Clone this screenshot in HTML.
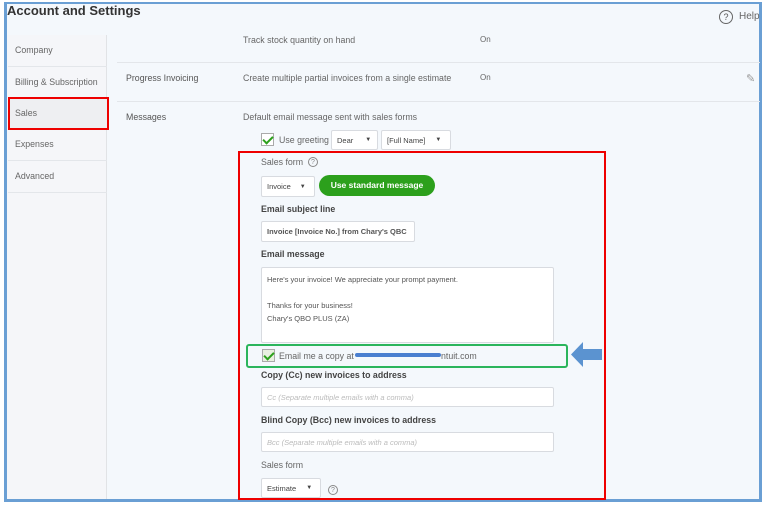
<!DOCTYPE html>
<html><head><style>
*{box-sizing:border-box;margin:0;padding:0}
body{width:766px;height:505px;background:#fff;font-family:"Liberation Sans",sans-serif;position:relative;overflow:hidden;color:#555}
.a{position:absolute}
.t{position:absolute;font-size:8.8px;color:#666;white-space:nowrap}
.b{font-weight:bold;color:#444}
.in{position:absolute;background:#fff;border:1px solid #d8dbe0;border-radius:2px;font-size:7.5px;color:#444;padding-left:5px;display:flex;align-items:center;white-space:nowrap}
.ph{color:#bbb;font-style:italic}
.hr{position:absolute;height:1px;background:#e3e6ea}
.cb{position:absolute;width:13px;height:13px;border:1px solid #aaa;background:#fff}
.cb:after{content:"";position:absolute;left:3px;top:0px;width:4px;height:8px;border:solid #2ca01c;border-width:0 2px 2px 0;transform:rotate(45deg)}
.q{position:absolute;width:10px;height:10px;border:1px solid #888;border-radius:50%;font-size:7px;text-align:center;line-height:9px;color:#888}
</style></head><body>
<div class="a" style="left:4px;top:2px;width:758px;height:500px;border:3px solid #6a9fd4;border-top-width:2px;background:#f4f8fc"></div>
<div class="a" style="left:7px;top:35px;width:100px;height:464px;background:#f5f6f9;border-right:1px solid #e1e3e6"></div>
<div class="t b" style="left:7px;top:3px;font-size:13px;color:#333">Account and Settings</div>
<div class="q" style="left:719px;top:10px;width:14px;height:14px;line-height:13px;font-size:9px;border-color:#666;color:#555">?</div>
<div class="t" style="left:739px;top:11px;font-size:10px">Help</div>
<div class="t" style="left:15px;top:45px">Company</div>
<div class="hr" style="left:8px;top:66px;width:99px"></div>
<div class="t" style="left:15px;top:77px">Billing &amp; Subscription</div>
<div class="hr" style="left:8px;top:97px;width:99px"></div>
<div class="a" style="left:8px;top:97px;width:101px;height:33px;border:2px solid #e00;background:#eeeff2"></div>
<div class="t" style="left:15px;top:108px">Sales</div>
<div class="t" style="left:15px;top:139px">Expenses</div>
<div class="hr" style="left:8px;top:160px;width:99px"></div>
<div class="t" style="left:15px;top:171px">Advanced</div>
<div class="hr" style="left:8px;top:192px;width:99px"></div>
<div class="t" style="left:243px;top:35px">Track stock quantity on hand</div>
<div class="t" style="left:480px;top:35px;font-size:8px">On</div>
<div class="hr" style="left:117px;top:62px;width:643px"></div>
<div class="t" style="left:126px;top:73px;color:#555">Progress Invoicing</div>
<div class="t" style="left:243px;top:73px">Create multiple partial invoices from a single estimate</div>
<div class="t" style="left:480px;top:73px;font-size:8px">On</div>
<div class="t" style="left:746px;top:72px;font-size:11px;color:#999">✎</div>
<div class="hr" style="left:117px;top:101px;width:643px"></div>
<div class="t" style="left:126px;top:112px;color:#555">Messages</div>
<div class="t" style="left:243px;top:112px">Default email message sent with sales forms</div>
<div class="cb" style="left:261px;top:133px"></div>
<div class="t" style="left:279px;top:135px">Use greeting</div>
<div class="in" style="left:331px;top:130px;width:47px;height:20px">Dear <span style="margin-left:12px;font-size:6px">▼</span></div>
<div class="in" style="left:381px;top:130px;width:70px;height:20px">[Full Name] <span style="margin-left:10px;font-size:6px">▼</span></div>
<div class="a" style="left:238px;top:151px;width:368px;height:349px;border:2px solid #e00"></div>
<div class="t" style="left:261px;top:157px">Sales form</div>
<div class="q" style="left:308px;top:157px">?</div>
<div class="in" style="left:261px;top:176px;width:54px;height:21px">Invoice <span style="margin-left:9px;font-size:6px">▼</span></div>
<div class="a" style="left:319px;top:175px;width:116px;height:21px;border-radius:11px;background:#2ca01c;color:#fff;font-size:8.5px;font-weight:bold;text-align:center;line-height:21px">Use standard message</div>
<div class="t b" style="left:261px;top:204px">Email subject line</div>
<div class="in" style="left:261px;top:221px;width:154px;height:21px;font-weight:bold;color:#555">Invoice [Invoice No.] from Chary's QBC</div>
<div class="t b" style="left:261px;top:249px">Email message</div>
<div class="in" style="left:261px;top:267px;width:293px;height:76px;display:block;padding-top:5px;line-height:13px;color:#555">Here's your invoice! We appreciate your prompt payment.<br><br>Thanks for your business!<br>Chary's QBO PLUS (ZA)</div>
<div class="a" style="left:246px;top:344px;width:322px;height:24px;border:2px solid #2bb55c;border-radius:3px"></div>
<div class="cb" style="left:262px;top:349px;background:#e8f0e0"></div>
<div class="t" style="left:279px;top:351px">Email me a copy at</div>
<div class="a" style="left:355px;top:353px;width:86px;height:4px;background:#4a7fd0;border-radius:2px"></div>
<div class="t" style="left:441px;top:351px">ntuit.com</div>
<svg class="a" style="left:571px;top:342px" width="31" height="25"><path d="M0 12.5 L12 0 V7 H31 V18 H12 V25 Z" fill="#5b93d0"/></svg>
<div class="t b" style="left:261px;top:370px">Copy (Cc) new invoices to address</div>
<div class="in ph" style="left:261px;top:387px;width:293px;height:20px">Cc (Separate multiple emails with a comma)</div>
<div class="t b" style="left:261px;top:415px">Blind Copy (Bcc) new invoices to address</div>
<div class="in ph" style="left:261px;top:432px;width:293px;height:20px">Bcc (Separate multiple emails with a comma)</div>
<div class="t" style="left:261px;top:460px">Sales form</div>
<div class="in" style="left:261px;top:478px;width:60px;height:20px">Estimate <span style="margin-left:10px;font-size:6px">▼</span></div>
<div class="q" style="left:328px;top:485px">?</div>
</body></html>
